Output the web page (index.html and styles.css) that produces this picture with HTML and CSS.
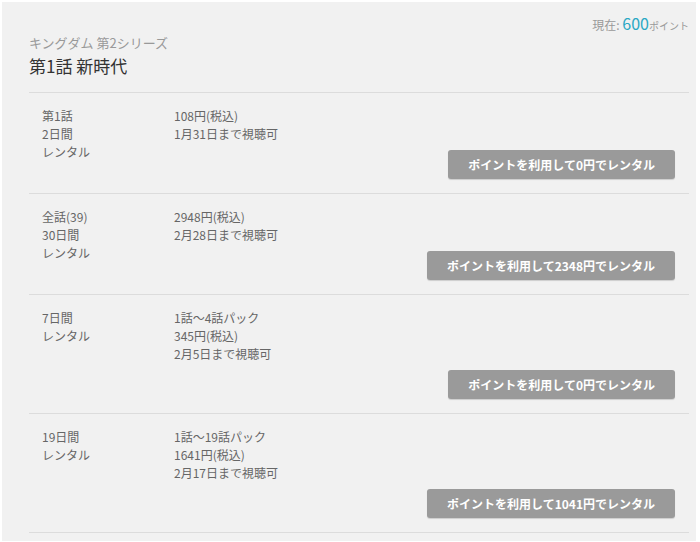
FILE: index.html
```html
<!DOCTYPE html>
<html lang="ja">
<head>
<meta charset="utf-8">
<link rel="stylesheet" href="styles.css">
</head>
<body>
<div class="panel">
  <div class="points">現在: <span class="num">600</span><span class="unit">ポイント</span></div>
  <div class="series">キングダム 第2シリーズ</div>
  <h1 class="title">第1話 新時代</h1>
  <div class="list">
    <div class="row">
      <div class="left">第1話<br>2日間<br>レンタル</div>
      <div class="right">
        <div class="info">108円(税込)<br>1月31日まで視聴可</div>
        <div class="actions"><button class="btn">ポイントを利用して0円でレンタル</button></div>
      </div>
    </div>
    <div class="row">
      <div class="left">全話(39)<br>30日間<br>レンタル</div>
      <div class="right">
        <div class="info">2948円(税込)<br>2月28日まで視聴可</div>
        <div class="actions"><button class="btn">ポイントを利用して2348円でレンタル</button></div>
      </div>
    </div>
    <div class="row">
      <div class="left">7日間<br>レンタル</div>
      <div class="right">
        <div class="info">1話～4話パック<br>345円(税込)<br>2月5日まで視聴可</div>
        <div class="actions"><button class="btn">ポイントを利用して0円でレンタル</button></div>
      </div>
    </div>
    <div class="row">
      <div class="left">19日間<br>レンタル</div>
      <div class="right">
        <div class="info">1話～19話パック<br>1641円(税込)<br>2月17日まで視聴可</div>
        <div class="actions"><button class="btn">ポイントを利用して1041円でレンタル</button></div>
      </div>
    </div>
  </div>
</div>
</body>
</html>
```

FILE: styles.css
```css
html, body {
  margin: 0;
  padding: 0;
  background: #ffffff;
}
body {
  font-family: "Noto Sans CJK JP", "Noto Sans", sans-serif;
  color: #666;
  font-size: 12px;
}
.panel {
  margin: 2px 4px 0 2px;
  background: #f1f1f1;
  padding: 10px 7px 8px 27px;
  min-height: 529px;
  box-sizing: border-box;
}
.points {
  text-align: right;
  height: 22px;
  line-height: 22px;
  color: #999;
  font-size: 12px;
}
.points .num {
  color: #2aa8c4;
  font-size: 16px;
}
.points .unit {
  font-size: 10px;
}
.series {
  color: #999;
  font-size: 13px;
  line-height: 18px;
}
.title {
  margin: 2px 0 14px;
  font-size: 17px;
  font-weight: normal;
  line-height: 24px;
  color: #333;
}
.row {
  display: flex;
  border-top: 1px solid #dcdcdc;
  padding: 14px 14px 14px 13px;
  line-height: 18px;
}
.row:last-child {
  border-bottom: 1px solid #dcdcdc;
}
.left {
  width: 132px;
  flex: none;
}
.right {
  flex: 1;
}
.actions {
  display: flex;
  justify-content: flex-end;
  margin-top: 7px;
}
.btn {
  height: 29px;
  padding: 0 20px;
  border: none;
  border-radius: 3px;
  background: #9a9a9a;
  color: #fff;
  font-family: "Noto Sans CJK JP", sans-serif;
  font-size: 12px;
  font-weight: bold;
  box-shadow: 0 1px 1px rgba(0,0,0,0.15);
}
```
